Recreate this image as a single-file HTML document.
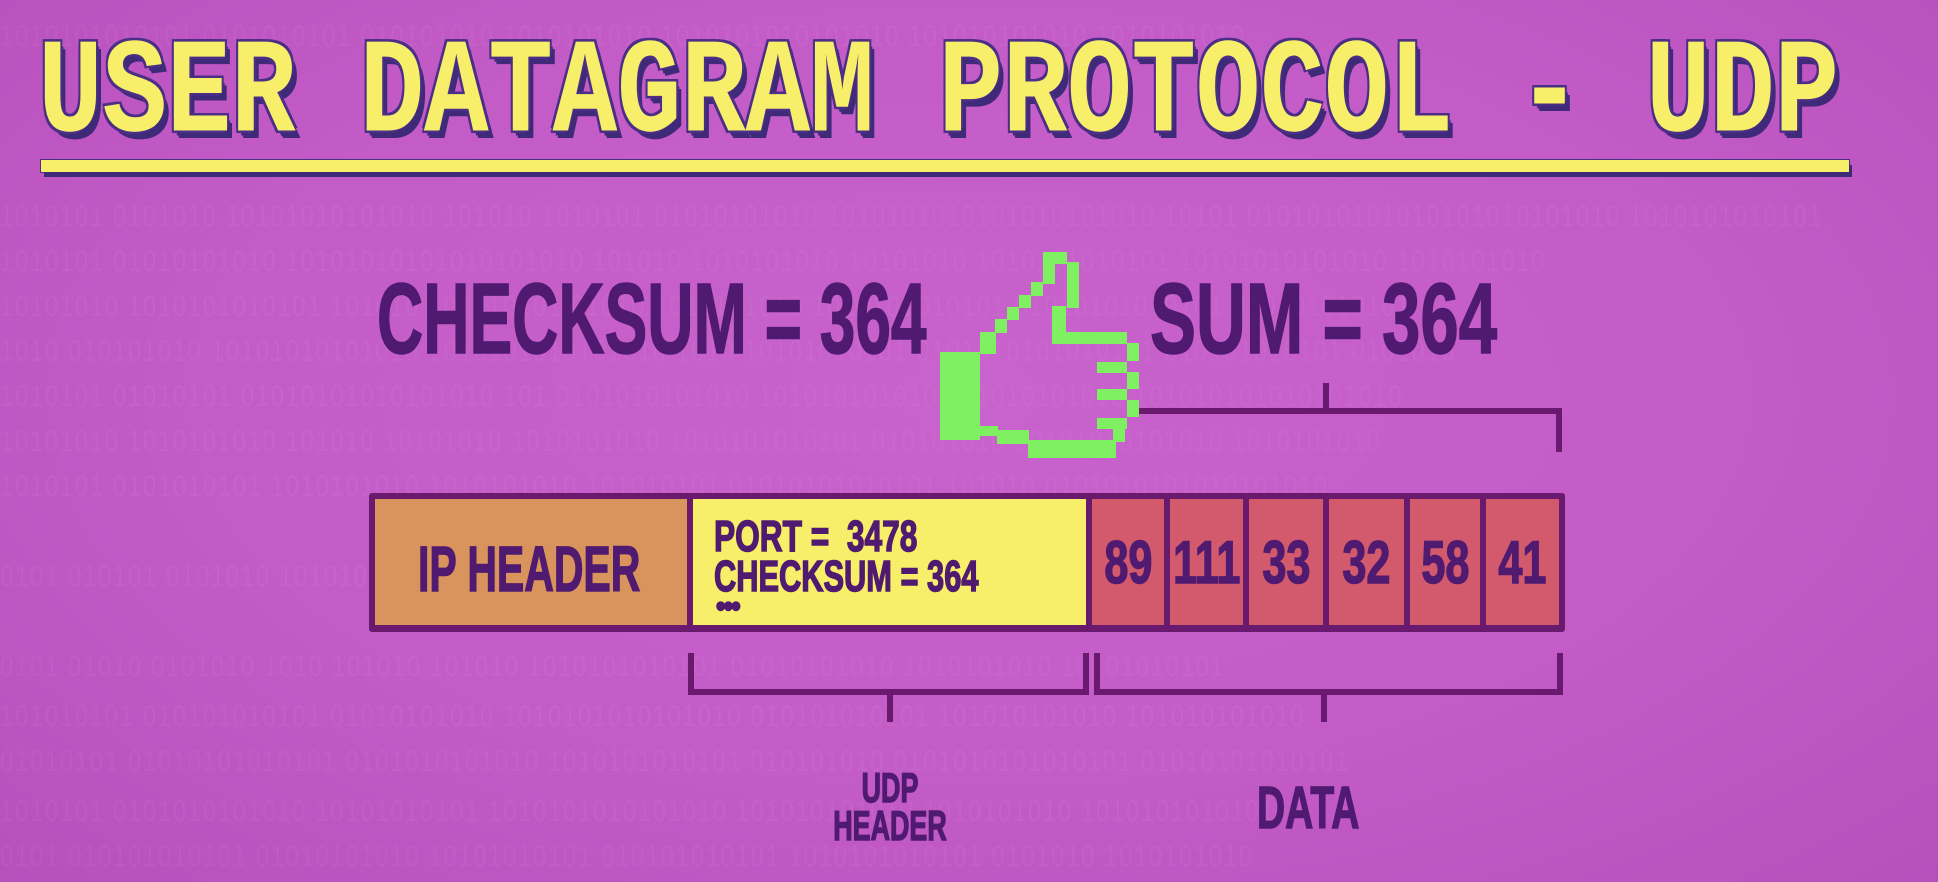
<!DOCTYPE html>
<html><head><meta charset="utf-8"><style>
html,body{margin:0;padding:0}
body{width:1938px;height:882px;overflow:hidden;position:relative;background:radial-gradient(ellipse at 50% 45%,#c862cc 0%,#c45cc8 55%,#b650bb 100%);font-family:"Liberation Sans",sans-serif}
.bin{position:absolute;left:0;width:1938px;font:30px "Liberation Sans",sans-serif;color:rgba(255,255,255,0.045);white-space:nowrap;letter-spacing:2px;transform:scaleX(0.8);transform-origin:left}
.t{position:absolute;font-weight:bold;color:#4f1a70;-webkit-text-stroke:1.5px #4f1a70;white-space:nowrap;transform-origin:left top;line-height:1}
.title{position:absolute;left:38px;top:28px;font:bold 108px "Liberation Mono",monospace;color:#f7ee6a;white-space:nowrap;transform:scaleY(1.25);transform-origin:left top;line-height:1;letter-spacing:-0.5px;
text-shadow:-2px -2px 0 #4b2f86,2px -2px 0 #4b2f86,-2px 2px 0 #4b2f86,5px 6px 0 #3f2a7a,3px 4px 0 #3f2a7a}
.b{position:absolute;background:#6a1a6e}
.g{position:absolute;background:#7ef062}
.cell{position:absolute;top:499px;height:126px;background:#d25a6c;display:flex;align-items:center;justify-content:center}
.cell span{font:bold 60px "Liberation Sans",sans-serif;color:#4f1a70;-webkit-text-stroke:1.5px #4f1a70;transform:scaleX(0.72);display:inline-block}
</style></head><body>
<div class="bin" style="top:200px">1010101 0101010 10101010101010 101010 1010101 01010101010 1010101010101010101010 10101 0101010101010101010101010 1010101010101</div>
<div class="bin" style="top:245px">1010101 01010101010 10101010101010101010 101010 1010101010 10101010 1010101010101 10101010101010 1010101010</div>
<div class="bin" style="top:290px">10101010 1010101010101 1010101 01010101 01010 1010101010 1010101010101 01010101010101 010101010101</div>
<div class="bin" style="top:335px">1010 010101010 10101010101010 1010101010101010 1010 10101010101 0101010101010101 010101010101 0101010</div>
<div class="bin" style="top:380px">1010101 01010101 01010101010101010 101 0101010101010 10101010101010 1010101010 101010101010101010</div>
<div class="bin" style="top:425px">10101010 1010101010 101010 10101010 1010101010 1010101010101 010101010 10101010101010 1010101010</div>
<div class="bin" style="top:470px">1010101 0101010101 1010101010 1010101010 101010101 01010101010101 101010 0101010101010101010</div>
<div class="bin" style="top:560px">0101 010101 0101010 1010101 1010101010 101010101 010101010 1010101010 1010101010101010</div>
<div class="bin" style="top:650px">0101 01010 0101010 1010 101010 101010 1010101010101 01010101010 1010101010 10101010101</div>
<div class="bin" style="top:700px">101010101 010101010101 01010101010 1010101010101010 010101010101 101010101010 101010101010</div>
<div class="bin" style="top:745px">01010101 01010101010101 0101010101010 1010101010101 010101010 0101010101010101 01010101010101</div>
<div class="bin" style="top:795px">1010101 0101010101010 10101010101 1010101010101010 101010101010 1010101010 1010101010101</div>
<div class="bin" style="top:840px">0101 010101010101 01010101010 10101010101 010101010101 1010101010101 0101010 1010101010</div>
<div class="bin" style="top:20px">1010101010101 0101010101 010101010 1010101010 1010101010101010 101010101010 1010101010</div>

<div class="title">USER DATAGRAM PROTOCOL - UDP</div>
<div style="position:absolute;left:41px;top:160px;width:1808px;height:12px;background:#f7ee6a;box-shadow:3px 5px 0 #3f2a7a,0 0 0 1px #4b2f86"></div>

<div class="t" style="left:377px;top:269px;font-size:100px;transform:scaleX(0.64)">CHECKSUM = 364</div>
<div class="t" style="left:1150px;top:269px;font-size:100px;transform:scaleX(0.69)">SUM = 364</div>

<div class="b" style="left:1137px;top:408px;width:425px;height:6px"></div>
<div class="b" style="left:1323px;top:383px;width:6px;height:28px"></div>
<div class="b" style="left:1556px;top:408px;width:6px;height:44px"></div>

<div class="g" style="left:940px;top:352px;width:40px;height:88px"></div>
<div class="g" style="left:1043px;top:252px;width:24px;height:12px"></div>
<div class="g" style="left:1067px;top:262px;width:12px;height:46px"></div>
<div class="g" style="left:1052px;top:306px;width:14px;height:38px"></div>
<div class="g" style="left:1052px;top:332px;width:75px;height:12px"></div>
<div class="g" style="left:1127px;top:343px;width:12px;height:18px"></div>
<div class="g" style="left:1097px;top:362px;width:30px;height:11px"></div>
<div class="g" style="left:1127px;top:372px;width:12px;height:17px"></div>
<div class="g" style="left:1097px;top:389px;width:30px;height:11px"></div>
<div class="g" style="left:1127px;top:400px;width:12px;height:17px"></div>
<div class="g" style="left:1097px;top:418px;width:30px;height:11px"></div>
<div class="g" style="left:1113px;top:428px;width:12px;height:14px"></div>
<div class="g" style="left:1028px;top:440px;width:88px;height:18px"></div>
<div class="g" style="left:997px;top:430px;width:32px;height:14px"></div>
<div class="g" style="left:980px;top:426px;width:18px;height:10px"></div>
<div class="g" style="left:1043px;top:262px;width:12px;height:22px"></div>
<div class="g" style="left:1031px;top:282px;width:12px;height:14px"></div>
<div class="g" style="left:1019px;top:295px;width:12px;height:13px"></div>
<div class="g" style="left:1007px;top:307px;width:12px;height:13px"></div>
<div class="g" style="left:995px;top:319px;width:12px;height:14px"></div>
<div class="g" style="left:980px;top:332px;width:16px;height:22px"></div>

<div class="b" style="left:369px;top:493px;width:1196px;height:139px;border-radius:3px"></div>
<div style="position:absolute;left:375px;top:499px;width:312px;height:126px;background:#d9935c"></div>
<div style="position:absolute;left:693px;top:499px;width:393px;height:126px;background:#f7ee6a"></div>
<div class="cell" style="left:1092px;width:72px"><span>89</span></div>
<div class="cell" style="left:1170px;width:73px"><span>111</span></div>
<div class="cell" style="left:1249px;width:74px"><span>33</span></div>
<div class="cell" style="left:1329px;width:75px"><span>32</span></div>
<div class="cell" style="left:1410px;width:70px"><span>58</span></div>
<div class="cell" style="left:1486px;width:73px"><span>41</span></div>

<div class="t" style="left:418px;top:537px;font-size:64px;transform:scaleX(0.64)">IP HEADER</div>
<div class="t" style="left:714px;top:515px;font-size:44px;transform:scaleX(0.72)">PORT =&nbsp; 3478</div>
<div class="t" style="left:714px;top:555px;font-size:44px;transform:scaleX(0.70)">CHECKSUM = 364</div>
<div class="t" style="left:716px;top:592px;font-size:30px;transform:scaleX(0.9);letter-spacing:-2px">•••</div>

<div class="b" style="left:688px;top:653px;width:6px;height:42px"></div>
<div class="b" style="left:1083px;top:653px;width:6px;height:42px"></div>
<div class="b" style="left:688px;top:689px;width:401px;height:6px"></div>
<div class="b" style="left:887px;top:692px;width:6px;height:30px"></div>
<div class="b" style="left:1094px;top:653px;width:6px;height:42px"></div>
<div class="b" style="left:1557px;top:653px;width:6px;height:42px"></div>
<div class="b" style="left:1094px;top:689px;width:469px;height:6px"></div>
<div class="b" style="left:1321px;top:692px;width:6px;height:30px"></div>

<div class="t" style="left:0;width:1780px;text-align:center;top:769px;font-size:42px;transform:scaleX(0.64);transform-origin:890px 0;line-height:38px">UDP<br>HEADER</div>
<div class="t" style="left:1257px;top:779px;font-size:59px;transform:scaleX(0.66)">DATA</div>
</body></html>
